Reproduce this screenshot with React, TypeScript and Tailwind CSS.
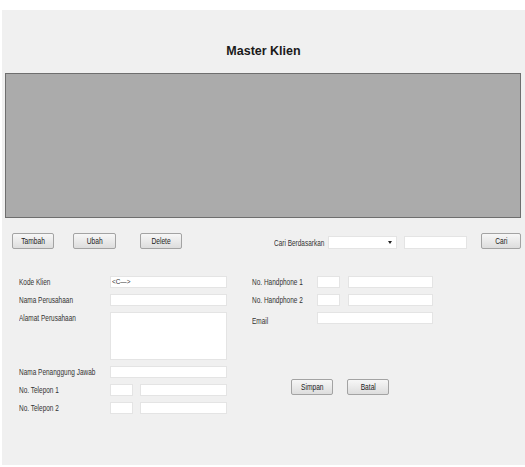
import React from "react"

const FONT = { fontFamily: "'Liberation Sans', Arial, sans-serif" }

function Btn({ label, w, className = "" }: { label: string; w: string; className?: string }) {
  return (
    <button
      className={`${w} h-[16px] shrink-0 rounded-[2px] border border-[#a3a3a3] bg-gradient-to-b from-[#f7f7f7] to-[#dddddd] flex items-center justify-center ${className}`}
    >
      <span className="inline-block whitespace-nowrap text-[9px] leading-none text-[#222] scale-x-[0.74]">{label}</span>
    </button>
  )
}

function Field({ w, h = "h-[12px]", value }: { w: string; h?: string; value?: string }) {
  return (
    <div className={`${w} ${h} shrink-0 border border-[#e4e4e4] bg-white pl-[1px] text-[8px] leading-[10px] text-[#333]`}>
      {value && <span className="inline-block origin-left scale-x-[0.8] whitespace-nowrap">{value}</span>}
    </div>
  )
}

function Label({ text }: { text: string }) {
  return (
    <div className="h-[12px] whitespace-nowrap text-[9px] leading-[12px] text-[#333]">
      <span className="inline-block origin-left scale-x-[0.72]">{text}</span>
    </div>
  )
}

export default function App() {
  return (
    <div className="w-[525px] h-[467px] bg-white pt-[10px] pl-[2px] overflow-hidden" style={FONT}>
      <div className="h-[455px] w-[523px] bg-[#f0f0f0] flex flex-col">
        {/* title */}
        <div className="h-[63px] pt-[33px] flex justify-center">
          <div className="text-[12.5px] leading-[16px] font-bold text-[#1a1a1a]">Master Klien</div>
        </div>

        {/* data grid area */}
        <div className="ml-[3px] w-[516px] h-[145px] bg-[#ababab] border border-[#6e6e6e]" />

        {/* toolbar */}
        <div className="mt-[15px] flex items-start">
          <Btn label="Tambah" w="w-[42px]" className="ml-[10px]" />
          <Btn label="Ubah" w="w-[43px]" className="ml-[19px]" />
          <Btn label="Delete" w="w-[42px]" className="ml-[24px]" />
          <div className="ml-[92px] mt-[4px] w-[54px]">
            <Label text="Cari Berdasarkan" />
          </div>
          <div className="mt-[3px] w-[69px] h-[13px] bg-white border border-[#e4e4e4] flex items-center justify-end pr-[4px]">
            <span className="block w-0 h-0 border-l-[2.5px] border-r-[2.5px] border-t-[3px] border-l-transparent border-r-transparent border-t-[#222]" />
          </div>
          <div className="ml-[7px] mt-[3px] w-[63px] h-[13px] bg-white border border-[#e4e4e4]" />
          <Btn label="Cari" w="w-[40px]" className="ml-[14px]" />
        </div>

        {/* form */}
        <div className="mt-[27px] ml-[17px] flex">
          {/* left column */}
          <div className="w-[208px] grid grid-cols-[91px_117px] gap-y-[6px]">
            <Label text="Kode Klien" />
            <Field w="w-[117px]" value="<C—>" />
            <Label text="Nama Perusahaan" />
            <Field w="w-[117px]" />
            <Label text="Alamat Perusahaan" />
            <Field w="w-[117px]" h="h-[48px]" />
            <Label text="Nama Penanggung Jawab" />
            <Field w="w-[117px]" />
            <Label text="No. Telepon 1" />
            <div className="flex gap-[7px]">
              <Field w="w-[23px]" />
              <Field w="w-[87px]" />
            </div>
            <Label text="No. Telepon 2" />
            <div className="flex gap-[7px]">
              <Field w="w-[23px]" />
              <Field w="w-[87px]" />
            </div>
          </div>

          {/* right column */}
          <div className="ml-[25px] flex flex-col">
            <div className="grid grid-cols-[65px_116px] gap-y-[6px]">
              <Label text="No. Handphone 1" />
              <div className="flex gap-[8px]">
                <Field w="w-[23px]" />
                <Field w="w-[85px]" />
              </div>
              <Label text="No. Handphone 2" />
              <div className="flex gap-[8px]">
                <Field w="w-[23px]" />
                <Field w="w-[85px]" />
              </div>
              <div className="pt-[3px]">
                <Label text="Email" />
              </div>
              <Field w="w-[116px]" />
            </div>
            <div className="mt-[52px] ml-[39px] flex gap-[14px]">
              <Btn label="Simpan" w="w-[42px]" />
              <Btn label="Batal" w="w-[42px]" />
            </div>
          </div>
        </div>
      </div>
    </div>
  )
}
